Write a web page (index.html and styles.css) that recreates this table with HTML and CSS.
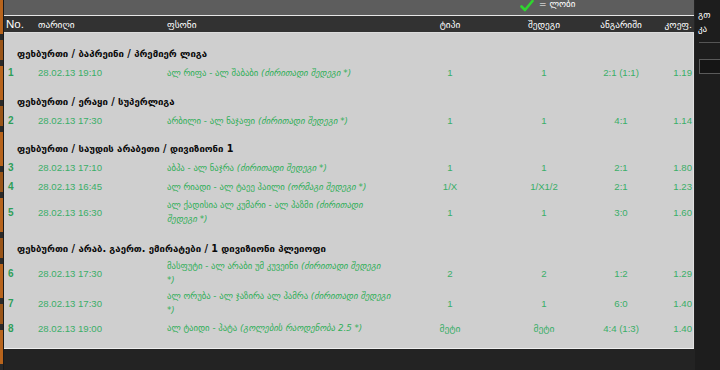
FILE: index.html
```html
<!DOCTYPE html>
<html lang="ka">
<head>
<meta charset="utf-8">
<title>ფსონები</title>
<link rel="stylesheet" href="styles.css">
</head>
<body>
<div class="page">
  <div class="edge"></div>
  <main class="panel">
    <div class="topbar">
      <span class="legend"><svg class="check" width="14" height="12" viewBox="0 0 14 12"><path d="M1.5 6.5 L5 10 L12.5 1" fill="none" stroke="#2fd62f" stroke-width="2.6" stroke-linecap="round" stroke-linejoin="round"/></svg><span class="legend-text">= ლობი</span></span>
    </div>
    <div class="head grid">
      <span class="c-no">No.</span>
      <span class="c-date">თარიღი</span>
      <span class="c-bet">ფსონი</span>
      <span class="c-mid">ტიპი</span>
      <span class="c-mid">შედეგი</span>
      <span class="c-mid">ანგარიში</span>
      <span class="c-odd">კოეფ.</span>
    </div>
    <div class="content">
      <div class="section s1">ფეხბურთი / ბაჰრეინი / პრემიერ ლიგა</div>
      <div class="row grid">
        <span class="c-no num">1</span>
        <span class="c-date">28.02.13 19:10</span>
        <span class="c-bet">ალ რიფა - ალ შაბაბი <i>(ძირითადი შედეგი *)</i></span>
        <span class="c-mid">1</span>
        <span class="c-mid">1</span>
        <span class="c-mid">2:1 (1:1)</span>
        <span class="c-odd">1.19</span>
      </div>

      <div class="section s2">ფეხბურთი / ერაყი / სუპერლიგა</div>
      <div class="row grid">
        <span class="c-no num">2</span>
        <span class="c-date">28.02.13 17:30</span>
        <span class="c-bet">არბილი - ალ ნაჯაფი <i>(ძირითადი შედეგი *)</i></span>
        <span class="c-mid">1</span>
        <span class="c-mid">1</span>
        <span class="c-mid">4:1</span>
        <span class="c-odd">1.14</span>
      </div>

      <div class="section s3">ფეხბურთი / საუდის არაბეთი / დივიზიონი 1</div>
      <div class="row grid">
        <span class="c-no num">3</span>
        <span class="c-date">28.02.13 17:10</span>
        <span class="c-bet">აბჰა - ალ ნაჯრა <i>(ძირითადი შედეგი *)</i></span>
        <span class="c-mid">1</span>
        <span class="c-mid">1</span>
        <span class="c-mid">2:1</span>
        <span class="c-odd">1.80</span>
      </div>
      <div class="row grid">
        <span class="c-no num">4</span>
        <span class="c-date">28.02.13 16:45</span>
        <span class="c-bet">ალ რიადი - ალ ტაეე ჰაილი <i>(ორმაგი შედეგი *)</i></span>
        <span class="c-mid">1/X</span>
        <span class="c-mid">1/X1/2</span>
        <span class="c-mid">2:1</span>
        <span class="c-odd">1.23</span>
      </div>
      <div class="row grid r5">
        <span class="c-no num">5</span>
        <span class="c-date">28.02.13 16:30</span>
        <span class="c-bet">ალ ქადისია ალ კუმარი - ალ ჰაზმი <i>(ძირითადი<br>შედეგი *)</i></span>
        <span class="c-mid">1</span>
        <span class="c-mid">1</span>
        <span class="c-mid">3:0</span>
        <span class="c-odd">1.60</span>
      </div>

      <div class="section s4">ფეხბურთი / არაბ. გაერთ. ემირატები / 1 დივიზიონი პლეიოფი</div>
      <div class="row grid r2">
        <span class="c-no num">6</span>
        <span class="c-date">28.02.13 17:30</span>
        <span class="c-bet">მასფუტი - ალ არაბი უმ კუვეინი <i>(ძირითადი შედეგი<br>*)</i></span>
        <span class="c-mid">2</span>
        <span class="c-mid">2</span>
        <span class="c-mid">1:2</span>
        <span class="c-odd">1.29</span>
      </div>
      <div class="row grid r2">
        <span class="c-no num">7</span>
        <span class="c-date">28.02.13 17:30</span>
        <span class="c-bet">ალ ორუბა - ალ ჯაზირა ალ ჰამრა <i>(ძირითადი შედეგი<br>*)</i></span>
        <span class="c-mid">1</span>
        <span class="c-mid">1</span>
        <span class="c-mid">6:0</span>
        <span class="c-odd">1.40</span>
      </div>
      <div class="row grid r8">
        <span class="c-no num">8</span>
        <span class="c-date">28.02.13 19:00</span>
        <span class="c-bet">ალ ტაიდი - ჰატა <i>(გოლების რაოდენობა 2.5 *)</i></span>
        <span class="c-mid">მეტი</span>
        <span class="c-mid">მეტი</span>
        <span class="c-mid">4:4 (1:3)</span>
        <span class="c-odd">1.40</span>
      </div>
    </div>
  </main>
  <aside class="side">
    <div class="side-text">გთ<br>კა</div>
    <div class="side-line"></div>
    <div class="side-box"></div>
  </aside>
</div>
</body>
</html>
```

FILE: styles.css
```css
* { box-sizing: border-box; }

html, body {
  margin: 0;
  padding: 0;
}

body {
  width: 720px;
  height: 370px;
  overflow: hidden;
  background: #232323;
  font-family: "Liberation Sans", "DejaVu Sans", Arial, sans-serif;
}

.page {
  display: flex;
  height: 370px;
}

.edge {
  width: 4px;
  flex: none;
  background: repeating-linear-gradient(180deg, #b8641c 0 34px, #2a2a2a 34px 40px, #9a5518 40px 60px, #2a2a2a 60px 66px);
  border-right: 1px solid #1a1a1a;
}

.panel {
  width: 690px;
  flex: none;
  display: flex;
  flex-direction: column;
  align-self: flex-start;
}

.topbar {
  height: 16px;
  background: #5d5d5d;
  border-bottom: 1px solid #e6e6e6;
  padding-left: 516px;
  display: flex;
  align-items: flex-start;
}

.legend {
  display: flex;
  align-items: center;
  gap: 5px;
  height: 11px;
}

.check { display: block; }

.legend-text {
  color: #ffffff;
  font-family: "DejaVu Sans", sans-serif;
  font-size: 9px;
  line-height: 11px;
  margin-top: -2px;
}

.grid {
  display: grid;
  grid-template-columns: 30px 129px 237px 100px 88px 66px 40px;
  align-items: center;
}

.head {
  height: 17px;
  background: #323232;
  color: #ffffff;
  font-size: 11.5px;
  border-bottom: 1px solid #dcdcdc;
}

.head .c-date,
.head .c-bet,
.head .c-mid,
.head .c-odd {
  font-family: "DejaVu Sans", sans-serif;
  font-size: 9.3px;
}

.head .c-no { padding-left: 2px; }

.c-no { padding-left: 4px; }
.c-date { padding-left: 4px; }
.c-bet { padding-left: 4px; }
.c-mid { text-align: center; }
.c-odd { text-align: right; padding-right: 2px; }

.content {
  background: #cfcfcf;
  border-bottom: 1px solid #efefef;
  border-right: 1px solid #e0e0e0;
  padding-bottom: 10px;
}

.section {
  height: 19px;
  display: flex;
  align-items: center;
  padding-left: 13px;
  font-family: "DejaVu Sans", sans-serif;
  font-weight: bold;
  font-size: 9.6px;
  color: #0a0a0a;
}

.s1 { margin-top: 11px; }
.s2 { margin-top: 10px; }
.s3 { margin-top: 9px; }
.s4 { margin-top: 11px; }

.row {
  height: 19px;
  color: #3aae68;
  font-size: 9.6px;
}

.row .c-bet {
  font-family: "DejaVu Sans", sans-serif;
  font-size: 8.7px;
  line-height: 14px;
  color: #2fae58;
}

.row .c-bet i { font-style: oblique; }

.r5 { height: 32px; }
.r2 { height: 30px; }
.r8 { height: 20px; }

.num {
  font-weight: bold;
  color: #2e9e57;
  font-size: 10px;
}

.side {
  flex: 1;
  margin-left: 1px;
  background: #1d1d1d;
  overflow: hidden;
  padding-top: 8px;
}

.side-text {
  color: #ffffff;
  font-family: "DejaVu Sans", sans-serif;
  font-size: 9px;
  line-height: 14px;
  padding-left: 3px;
  white-space: nowrap;
}

.side-line {
  margin-top: 6px;
  height: 1px;
  background: #555555;
  margin-left: 4px;
}

.side-box {
  margin-top: 16px;
  margin-left: 4px;
  height: 15px;
  border: 1px solid #5a5a5a;
  border-right: none;
  background: #151515;
}
```
